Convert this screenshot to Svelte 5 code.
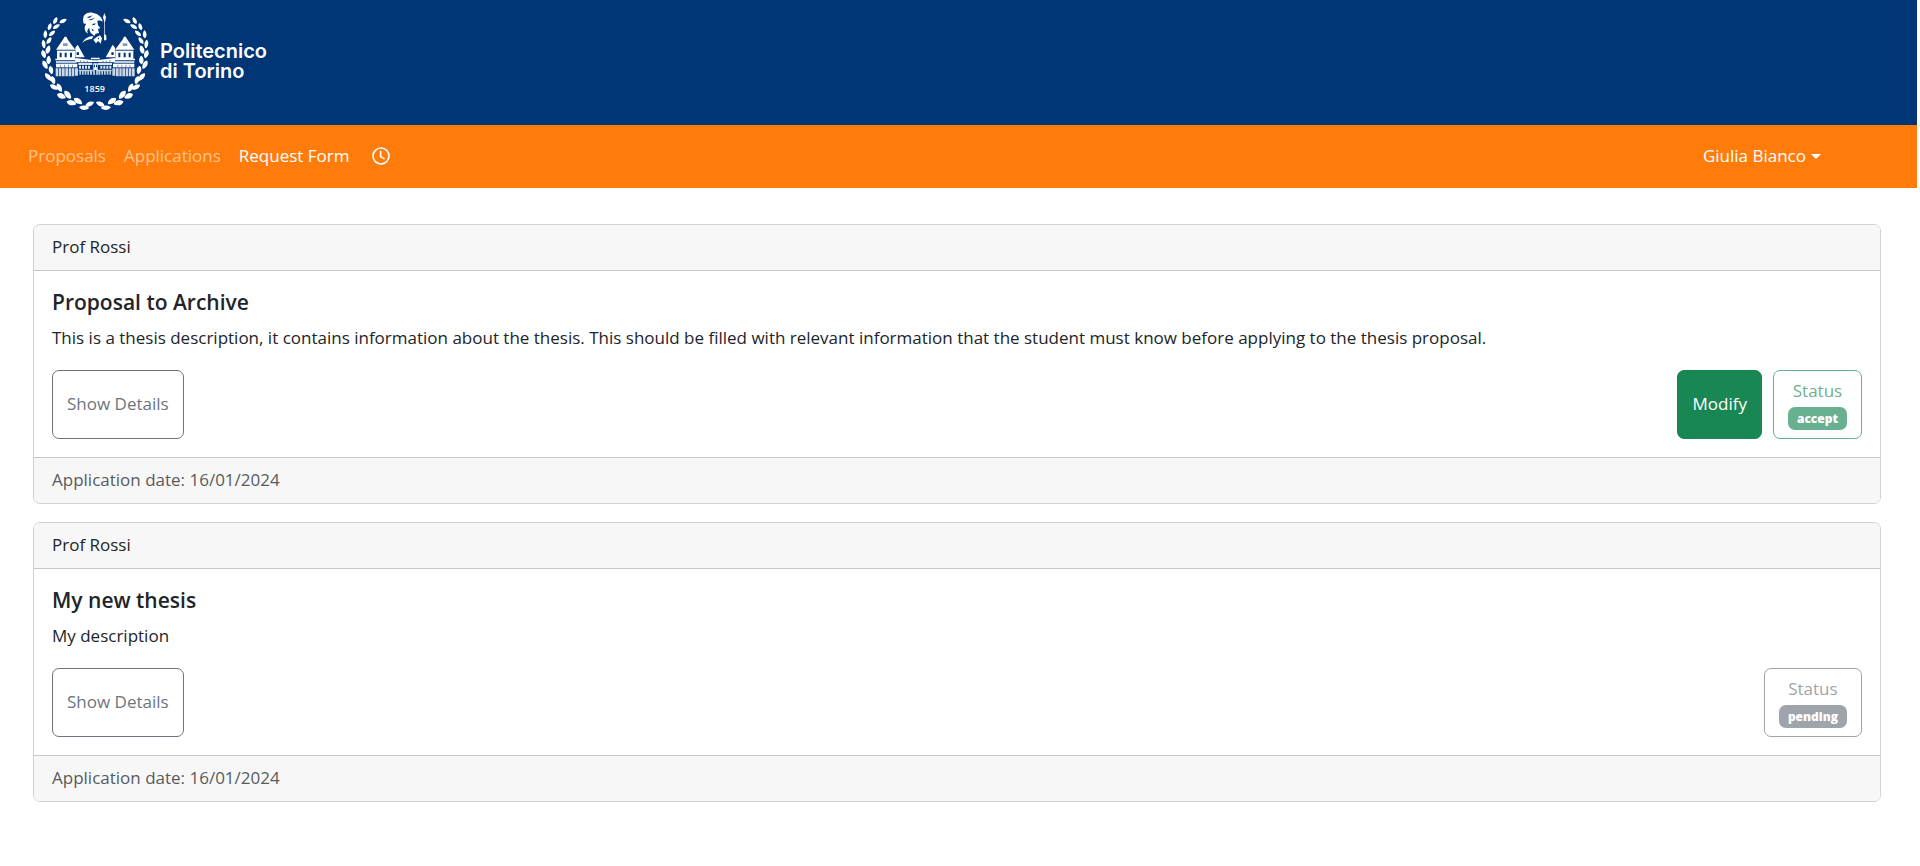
<script>
  const links = [
    { label: 'Proposals', active: false },
    { label: 'Applications', active: false },
    { label: 'Request Form', active: true },
  ];

  const applications = [
    {
      supervisor: 'Prof Rossi',
      title: 'Proposal to Archive',
      description:
        'This is a thesis description, it contains information about the thesis. This should be filled with relevant information that the student must know before applying to the thesis proposal.',
      status: 'accept',
      editable: true,
      date: '16/01/2024',
    },
    {
      supervisor: 'Prof Rossi',
      title: 'My new thesis',
      description: 'My description',
      status: 'pending',
      editable: false,
      date: '16/01/2024',
    },
  ];

  // Leaves of one laurel branch, tip to stem: x, y, angle, half length, half width.
  const leaves = [
    [99, 63, -25, 12, 5],
    [76, 62, -62, 11, 5],
    [79, 80, -32, 12, 5],
    [59, 80, -72, 11, 5],
    [66, 100, -42, 12, 5],
    [46, 103, -88, 12, 5],
    [57, 122, -55, 12, 5],
    [41, 132, 82, 13, 5],
    [54, 149, -72, 13, 6],
    [41, 162, 72, 13, 6],
    [56, 180, -88, 13, 6],
    [45, 194, 62, 14, 6],
    [63, 210, 78, 13, 6],
    [55, 231, 48, 15, 6],
    [69, 240, 72, 13, 6],
    [72, 261, 30, 14, 6],
    [88, 263, 62, 14, 6],
    [94, 288, 22, 14, 7],
    [113, 284, 50, 15, 7],
    [124, 308, 14, 15, 7],
    [144, 303, 34, 15, 7],
    [162, 323, 4, 15, 6],
    [179, 312, -24, 14, 6],
  ];
</script>

{#snippet branch()}
  {#each leaves as [x, y, angle, rx, ry]}
    <path
      transform="translate({x} {y}) rotate({angle})"
      d="M{-rx} 0Q{-rx / 2} {-ry * 1.5} {rx / 3} {-ry}Q{rx} {-ry / 2} {rx} 0Q{rx} {ry / 2} {rx / 3} {ry}Q{-rx / 2} {ry * 1.5} {-rx} 0Z"
    />
  {/each}
{/snippet}

{#snippet wing()}
  <path d="M104 110h5L114 120 L136 149 H78 L98 120Z" />
  <path d="M81 152h54v26h-54z" />
  <path d="M143 134 L164 172 H136 V143Z" />
  <path d="M76 176h62v5h-62z M78 184h60v4h-60z M136 174L186 180V187H136Z" />
  <path d="M78 191h64v11h-64z" />
  <path opacity="0.8" d="M77 205h8v24h-8z M87 205h7v24h-7z M96 205h8v24h-8z M106 205h8v24h-8z M116 205h7v24h-7z M125 205h8v24h-8z M135 205h9v22h-9z" />
  <path opacity="0.85" d="M145 189h42v6h-42z M147 197h6v9h-6z M156 197h6v9h-6z M165 197h6v9h-6z M174 197h6v9h-6z" />
  <path opacity="0.75" d="M146 209h43v5h-43z M148 214h5v10h-5z M156 214h5v10h-5z M164 214h5v10h-5z M172 214h5v10h-5z M180 214h6v10h-6z" />
  <g class="cut">
    <path d="M89 158h6v14h-6z M104 158h6v14h-6z M120 158h6v14h-6z M140 157h7v8h-7z" />
    <path opacity="0.5" d="M99 130h14v8h-14z M90 194h3v8h-3z M102 194h3v8h-3z M114 194h3v8h-3z M126 194h3v8h-3z M150 181h4v4h-4z M160 182h4v4h-4z M170 183h4v3h-4z" />
  </g>
{/snippet}

<div class="page">
  <header class="brand">
    <a class="logo" href="#home">
      <svg width="130" height="120" viewBox="0 0 390 360" aria-hidden="true">
        <g fill="#fff">
          {@render branch()}
          <g transform="translate(390 0) scale(-1 1)">{@render branch()}</g>
          {@render wing()}
          <g transform="translate(391 0) scale(-1 1)">{@render wing()}</g>
          <path d="M183 173h26v5h-26z M186 181h20v5h-20z M190 190h13v34h-13z" />
          <path class="cut" d="M194 210h5v14h-5z M192 194h3v8h-3z M198 194h3v8h-3z" />
          <path d="M160 66C156 45 170 34 190 39C204 42 217 51 218 65C212 61 207 61 202 63L204 76L211 84L204 87L207 99L197 101L193 108L187 103C180 98 178 91 178 83C172 88 170 94 174 101C163 95 161 80 169 71C160 72 159 69 160 66Z" />
          <path d="M157 128C165 114 176 109 190 108L186 117C176 117 167 121 157 128Z M190 119L200 111L210 106L216 115L212 131L205 123L198 130Z" />
          <path d="M223 39L228 52L225 66V102L229 107V121H222V107L223 102V66L219 52Z" />
          <path class="cut" d="M187 72L197 70L195 74L188 76Z M184 85L192 91L188 94Z M174 60L196 53L184 61Z M170 52L188 46L178 54Z M203 113L208 113L206 119Z" />
          <text x="194" y="276" text-anchor="middle">1859</text>
        </g>
      </svg>
      <span class="name">
        <span>Politecnico</span>
        <span>di Torino</span>
      </span>
    </a>
  </header>

  <nav class="bar">
    <div class="links">
      {#each links as link}
        <a href="#{link.label}" class:active={link.active}>{link.label}</a>
      {/each}
      <button class="clock" aria-label="Virtual clock">
        <svg width="18" height="18" viewBox="0 0 18 18" fill="none" stroke="currentColor" stroke-width="1.6" stroke-linecap="round" stroke-linejoin="round" aria-hidden="true">
          <circle cx="9" cy="9" r="8" />
          <path d="M8.600 4.500V9.600L12 11.600" />
        </svg>
      </button>
    </div>
    <button class="user">Giulia Bianco<i></i></button>
  </nav>

  <main>
    {#each applications as app}
      <article class="card">
        <div class="card-header">{app.supervisor}</div>
        <div class="card-body">
          <h5>{app.title}</h5>
          <p>{app.description}</p>
          <div class="actions">
            <button class="btn details">Show Details</button>
            <div class="right">
              {#if app.editable}
                <button class="btn modify">Modify</button>
              {/if}
              <button class="btn status {app.status}" disabled>
                Status
                <span class="badge">{app.status}</span>
              </button>
            </div>
          </div>
        </div>
        <footer>Application date: {app.date}</footer>
      </article>
    {/each}
  </main>
</div>

<style>
  :global(body) {
    margin: 0;
    background: #fff;
  }

  .page {
    padding-right: 3px;
    font-family: 'Segoe UI', 'Open Sans', 'Noto Sans', sans-serif;
    font-size: 17px;
    line-height: 26px;
    color: #212529;
  }

  button {
    font: inherit;
    color: inherit;
    background: none;
    border: 0;
    padding: 0;
  }

  .brand {
    display: flex;
    padding: 0 30px 5px;
    background: #003576;
  }

  .logo {
    display: flex;
    align-items: center;
    color: #fff;
    text-decoration: none;
  }

  .name {
    display: flex;
    flex-direction: column;
    padding-top: 2px;
    font-family: Inter, sans-serif;
    font-size: 20px;
    font-weight: 600;
    line-height: 20px;
  }

  .logo text {
    font-family: 'Open Sans', sans-serif;
    font-size: 27px;
    font-weight: 600;
  }

  .cut {
    fill: #003576;
  }

  .bar {
    display: flex;
    align-items: center;
    justify-content: space-between;
    padding: 18px 96px 19px 28px;
    background: #ff7c0a;
    color: #fff;
  }

  .links {
    display: flex;
    align-items: center;
    gap: 18px;
  }

  .links a {
    color: rgba(255, 255, 255, 0.55);
    text-decoration: none;
  }

  .links a.active {
    color: #fff;
  }

  .clock {
    display: flex;
    margin-left: 4px;
  }

  .user {
    display: flex;
    align-items: center;
    gap: 5px;
  }

  .user i {
    border: 5px solid transparent;
    border-top-color: #fff;
    border-bottom: 0;
  }

  main {
    display: flex;
    flex-direction: column;
    gap: 18px;
    padding: 36px 36px 36px 33px;
  }

  .card {
    border: 1px solid #d2d2d2;
    border-radius: 7px;
    overflow: hidden;
  }

  .card-header,
  footer {
    padding: 9px 18px 10px;
    background: #f7f7f7;
  }

  .card-header {
    border-bottom: 1px solid #c8c8c8;
  }

  footer {
    border-top: 1px solid #c8c8c8;
    color: #585b5e;
  }

  .card-body {
    padding: 18px;
  }

  h5 {
    margin: 0 0 9px;
    font-size: 21px;
    font-weight: 600;
    line-height: 27px;
  }

  p {
    margin: 0 0 19px;
  }

  .actions,
  .right {
    display: flex;
    justify-content: space-between;
  }

  .right {
    gap: 11px;
  }

  .btn {
    padding: 7px 14px 8px;
    border: 1px solid;
    border-radius: 7px;
  }

  .details {
    color: #6c757d;
  }

  .modify {
    background: #198754;
    border-color: #198754;
    color: #fff;
  }

  .status {
    display: flex;
    flex-direction: column;
    align-items: center;
    gap: 3px;
    color: #6c757d;
    opacity: 0.65;
  }

  .status.accept {
    color: #198754;
  }

  .badge {
    padding: 0 9px;
    border-radius: 7px;
    background: #6c757d;
    color: #fff;
    font-size: 12px;
    font-weight: 800;
    line-height: 23px;
  }

  .accept .badge {
    background: #198754;
  }
</style>
